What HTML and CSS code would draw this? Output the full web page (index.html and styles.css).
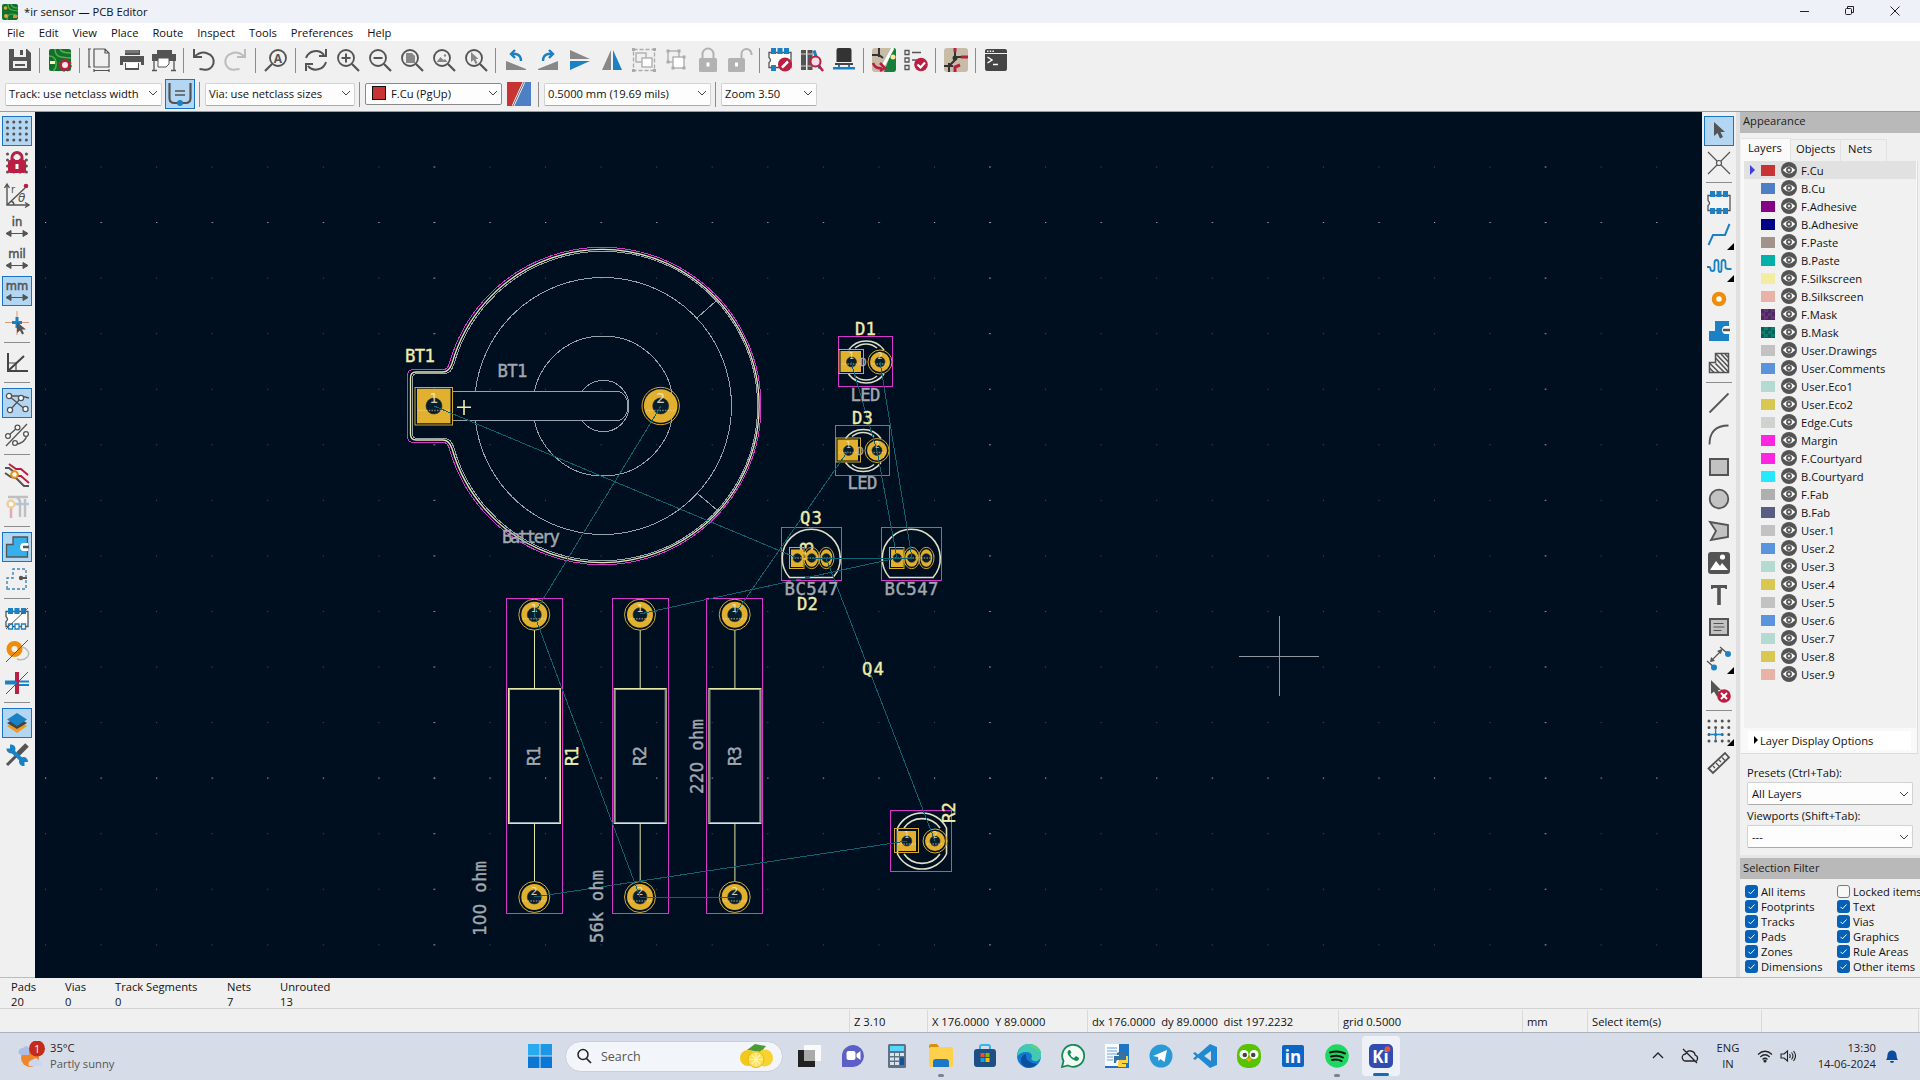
FILE: index.html
```html
<!DOCTYPE html>
<html lang="en">
<head>
<meta charset="utf-8">
<title>*ir sensor — PCB Editor</title>
<link rel="stylesheet" href="styles.css">
</head>
<body>
<svg class="defs" aria-hidden="true">
  <symbol id="eye" viewBox="0 0 16 16"><circle cx="8" cy="8" r="8" fill="#545454"/><path d="M1.8 8Q8 .8 14.200 8Q8 15.200 1.800 8Z" fill="#fff"/><circle cx="8" cy="8" r="2.900" fill="#545454"/><circle cx="8" cy="8" r="1.300" fill="#ddd"/></symbol>
  <symbol id="chev" viewBox="0 0 10 10"><path d="M1 3l4 4 4-4" fill="none" stroke="#444" stroke-width="1"/></symbol>
  <symbol id="mag" viewBox="0 0 24 24"><circle cx="10" cy="10" r="8" fill="none" stroke="#545454" stroke-width="1.800"/><path d="M16 16l7 7" stroke="#545454" stroke-width="2.200"/></symbol>
  <symbol id="tick" viewBox="0 0 13 13"><rect width="13" height="13" rx="3" fill="#0560b8"/><path d="M3.500 6.800l2 2 4-4.300" fill="none" stroke="#fff" stroke-width="1"/></symbol>
</svg>

<header class="titlebar">
  <svg class="appicon" viewBox="0 0 16 16"><rect width="16" height="16" rx="2" fill="#12702d"/><path d="M6 0q0 5 4 6t6 1M9 0q1 4 7 4M5 16q0-6 5-6t6 3" fill="none" stroke="#52b04c" stroke-width="1.200"/><circle cx="3.500" cy="4" r="1.800" fill="#e8a33a"/><circle cx="4" cy="12" r="2" fill="#e8a33a"/><rect x="11" y="11" width="4" height="3" fill="#e08c30"/></svg>
  <span class="title">*ir sensor — PCB Editor</span>
  <svg class="winbtns" viewBox="0 0 120 22" fill="none" stroke="#222"><path d="M9 10.500h9" /><rect x="54.500" y="7.500" width="6" height="6" rx="1"/><path d="M56.500 7V5.500h6v6H61M99.500 5.500l9 9m0-9l-9 9"/></svg>
</header>
<nav class="menubar"><span>File</span><span>Edit</span><span>View</span><span>Place</span><span>Route</span><span>Inspect</span><span>Tools</span><span>Preferences</span><span>Help</span></nav>

<div class="toolbar">
  <b><svg viewBox="0 0 24 24"><path d="M1 1h18l4 4v18H1z" fill="#545454"/><path d="M6 1h12v8H6zM5 13h14v7H5z" fill="#efefef"/><path d="M12 2h3v5h-3zM7 16h10v2H7z" fill="#545454"/></svg></b><hr>
  <b><svg viewBox="0 0 24 24"><rect x="1" y="1" width="22" height="22" rx="2" fill="#12702d"/><path d="M7 1q0 7 6 8t10 1M12 1q1 4 11 4M1 8q6 0 7 6t-3 9" fill="none" stroke="#52b04c" stroke-width="1.500"/><path d="M2 13h5v3H2z" fill="#fff3c0"/><circle cx="17" cy="17" r="4" fill="#f2e9e9" stroke="#ba1f43" stroke-width="2"/><circle cx="17" cy="17" r="5.800" fill="none" stroke="#ba1f43" stroke-width="2" stroke-dasharray="2.400 2.150"/></svg></b><hr>
  <b><svg viewBox="0 0 24 24" fill="none" stroke="#545454" stroke-width="1.200"><path d="M6 1h11l4 4v14H6zM17 1v4h4M1 1v18M0 1h3M0 19h3M6 22.500h15M6 21v3M21 21v3"/></svg></b>
  <b><svg viewBox="0 0 24 24"><path d="M5 2h15v5H5zM0 8h24v9h-3v-3H3v3H0zM5 15h14v7H5z" fill="#545454"/><path d="M6 15h12v5H6z" fill="#fff"/><path d="M5 2h14v3H5z" fill="#777"/></svg></b>
  <b><svg viewBox="0 0 24 24"><path d="M5 2h15v4H5zM0 6h24v7H0z" fill="#545454"/><path d="M6 10h11v6l-3 3H6z" fill="#fff" stroke="#545454"/><path d="M2 13v9M22 13v9M0 22.500h5M19 22.500h5" stroke="#545454" stroke-width="1.300"/></svg></b><hr>
  <b><svg viewBox="0 0 24 24" fill="none" stroke="#545454" stroke-width="2"><path d="M2 1v8h8M2.500 8.500q7-6 13-3a8 8 0 0 1-4 16l-4-.5"/></svg></b>
  <b><svg viewBox="0 0 24 24" fill="none" stroke="#bcbcbc" stroke-width="2"><path d="M21 1v8h-8M20.500 8.500q-7-6-13-3a8 8 0 0 0 4 16l4-.5"/></svg></b><hr>
  <b><svg viewBox="0 0 24 24"><g transform="matrix(-1 0 0 1 24 0)"><use href="#mag"/></g><text x="14" y="14.500" text-anchor="middle" class="iconA">A</text></svg></b><hr>
  <b><svg viewBox="0 0 24 24" fill="none" stroke="#545454" stroke-width="2"><path d="M2 10A10.500 10.500 0 0 1 20 7M22 1v7h-7M22 14A10.500 10.500 0 0 1 4 18M2 23v-7h7"/></svg></b>
  <b><svg viewBox="0 0 24 24"><use href="#mag"/><path d="M5.500 10h9M10 5.500v9" stroke="#545454" stroke-width="2"/></svg></b>
  <b><svg viewBox="0 0 24 24"><use href="#mag"/><path d="M5.500 10h9" stroke="#545454" stroke-width="2"/></svg></b>
  <b><svg viewBox="0 0 24 24"><use href="#mag"/><path d="M6 5h6l3 3v7H6z" fill="#888"/></svg></b>
  <b><svg viewBox="0 0 24 24"><use href="#mag"/><path d="M4.500 14l4-5 3 3 1.500-1 2.500 3z" fill="#888"/><circle cx="13" cy="7.500" r="1.200" fill="#888"/></svg></b>
  <b><svg viewBox="0 0 24 24"><use href="#mag"/><path d="M7 4v10l2.500-2 2 4 2-1-2-4h3z" fill="#888"/></svg></b><hr>
  <b><svg viewBox="0 0 24 24"><path d="M2 13l20 8v1H2z" fill="#888"/><path d="M8 6h4q5 1 5 7M11 2L7 6l4 4" fill="none" stroke="#1a81c4" stroke-width="2.400"/></svg></b>
  <b><svg viewBox="0 0 24 24"><path d="M22 13L2 21v1h20z" fill="#888"/><path d="M16 6h-4q-5 1-5 7M13 2l4 4-4 4" fill="none" stroke="#1a81c4" stroke-width="2.400"/></svg></b>
  <b><svg viewBox="0 0 24 24"><path d="M2 2l20 9H2z" fill="#888"/><path d="M2 13h20L2 22z" fill="#1a81c4"/></svg></b>
  <b><svg viewBox="0 0 24 24"><path d="M11 2v20H2z" fill="#888"/><path d="M13 2v20h9z" fill="#1a81c4"/></svg></b>
  <b><svg viewBox="0 0 24 24" fill="none" stroke="#aaa" stroke-width="1.300"><rect x="1.500" y="1.500" width="21" height="21" stroke-dasharray="4 2"/><rect x="4" y="5" width="10" height="9"/><rect x="10" y="10" width="10" height="9" fill="#fff"/><path d="M0 1.500h3M21 1.500h3M0 22.500h3M21 22.500h3" stroke-width="3"/></svg></b>
  <b><svg viewBox="0 0 24 24" fill="none" stroke="#aaa" stroke-width="1.300"><rect x="4" y="3" width="11" height="11"/><rect x="9" y="9" width="11" height="11" fill="#fff"/><path d="M2.500 3h3M13.500 3h3M2.500 14h3M18.500 9h3M7.500 20h3M18.500 20h3" stroke-width="3"/></svg></b>
  <b><svg viewBox="0 0 24 24"><path d="M6.500 12V6a5.500 5.500 0 0 1 11 0v6" fill="none" stroke="#b2b2b2" stroke-width="2"/><rect x="3" y="10" width="18" height="14" rx="1.500" fill="#b2b2b2"/><path d="M12 14.500v4" stroke="#fff" stroke-width="3"/></svg></b>
  <b><svg viewBox="0 0 24 24"><path d="M13.500 12V6a5 5 0 0 1 10 0v1" fill="none" stroke="#b2b2b2" stroke-width="2"/><rect x="0" y="10" width="17" height="14" rx="1.500" fill="#b2b2b2"/><path d="M8.500 14.500v4" stroke="#fff" stroke-width="3"/></svg></b><hr>
  <b><svg viewBox="0 0 24 24"><path d="M1 4.500h22v15H1v-5q3-2 0-5z" fill="#fff" stroke="#545454" stroke-width="1.300"/><path d="M3 0h5v6H3zM9.500 0h5v6h-5zM16 0h5v6h-5zM3 17h5v6H3z" fill="#1a81c4"/><circle cx="17" cy="16.500" r="7" fill="#ba1f43"/><path d="M14 19.500l6-6" stroke="#fff" stroke-width="2.500"/></svg></b>
  <b><svg viewBox="0 0 24 24"><path d="M1 2h5v20H1zM7.500 2h5v20h-5z" fill="#545454"/><path d="M1 6h5M7.500 6h5M1 18h5M7.500 18h4" stroke="#ccc"/><path d="M12.500 3l3-1 6 18-3 1z" fill="#1a81c4"/><circle cx="15.500" cy="13.500" r="5" fill="#f3dfe4" stroke="#ba1f43" stroke-width="2"/><path d="M19 18l4 5" stroke="#ba1f43" stroke-width="2.500"/></svg></b>
  <b><svg viewBox="0 0 24 24"><path d="M4.500 2Q4.500 0 6.500 0h11q2 0 2 2v12h-15z" fill="#333"/><path d="M3 15h18v2H3z" fill="#444"/><path d="M1 19h22v2.500H1zM6 17h2v2H6zM16 17h2v2h-2z" fill="#1a81c4"/></svg></b><hr>
  <b><svg viewBox="0 0 24 24"><rect width="24" height="24" rx="3" fill="#c7bca6"/><path d="M21 0h1q2 0 2 3v18q0 3-3 3h-9z" fill="#16803a"/><path d="M7 0v9M0 7h7l4 3" stroke="#333" stroke-width="2" fill="none"/><path d="M21 0L11 18" stroke="#fff" stroke-width="3"/><circle cx="21" cy="9" r="2.500" fill="#ffe7a0"/><path d="M1 15q2 6 9 5M8 15l5 5-5 3" fill="none" stroke="#ba1f43" stroke-width="2.500"/></svg></b>
  <b><svg viewBox="0 0 24 24"><path d="M1 2.500h4v4H1zM1 10h4v4H1zM1 17.500h4v4H1z" fill="none" stroke="#545454" stroke-width="1.300"/><path d="M8 4.500h9M8 12h5" stroke="#545454" stroke-width="1.400"/><circle cx="17" cy="16.500" r="6.800" fill="#ba1f43"/><path d="M13.500 16.500l3 3 4.500-5" fill="none" stroke="#fff" stroke-width="2.200"/></svg></b><hr>
  <b><svg viewBox="0 0 24 24"><rect width="24" height="24" rx="3" fill="#c7bca6"/><path d="M11 3v9l-6 6M11 9h10M5 15v9M0 18h9" stroke="#333" stroke-width="2" fill="none"/><circle cx="11" cy="10" r="2.500" fill="#333"/><path d="M11 0v4M17 9h7M11 24v-5l5-2" stroke="#ba1f43" stroke-width="3" fill="none"/></svg></b><hr>
  <b><svg viewBox="0 0 24 24"><rect x="1" y="1" width="22" height="22" rx="2" fill="#454545"/><path d="M1 5.500h22" stroke="#efefef"/><path d="M3 3.200h7" stroke="#efefef" stroke-width="1.500" stroke-dasharray="1.500 1.200"/><path d="M3.500 9l4.500 3-4.500 3M9 16.500h5" fill="none" stroke="#fff" stroke-width="1.500"/></svg></b>
</div>

<div class="toolbar2">
  <div class="combo w157">Track: use netclass width<svg><use href="#chev"/></svg></div>
  <div class="toggle"><svg viewBox="0 0 24 24"><path d="M1.500 1v15q0 5 5 5h11q5 0 5-5V1" fill="none" stroke="#545454" stroke-width="2.200"/><path d="M7 9h10M7 13h10" stroke="#545454" stroke-width="1.300"/><circle cx="12" cy="21" r="3" fill="#1a81c4"/></svg></div>
  <hr>
  <div class="combo w150">Via: use netclass sizes<svg><use href="#chev"/></svg></div>
  <hr>
  <div class="combo layer w137"><i></i>F.Cu (PgUp)<svg><use href="#chev"/></svg></div>
  <svg class="pair" viewBox="0 0 24 24"><path d="M0 0h24v24H0z" fill="#4d7fc4"/><path d="M0 0h17L7 24H0z" fill="#c83434"/><path d="M17 0L6 24" stroke="#fff" stroke-width="2.500"/><path d="M17 0L6 24" stroke="#444" stroke-width=".8"/></svg>
  <hr>
  <div class="combo w167">0.5000 mm (19.69 mils)<svg><use href="#chev"/></svg></div>
  <hr>
  <div class="combo w96">Zoom 3.50<svg><use href="#chev"/></svg></div>
</div>

<main class="work">
  <div class="vbar left">
    <b class="on"><svg viewBox="0 0 24 24"><path d="M2.500 3h24M2.500 9h24M2.500 15h24M2.500 21h24" stroke="#545454" stroke-width="3" stroke-linecap="round" stroke-dasharray="0 6.300"/></svg></b>
    <b><svg viewBox="0 0 24 24"><path d="M2.500 3h24M2.500 9h24M2.500 15h24M2.500 21h24" stroke="#545454" stroke-width="3" stroke-linecap="round" stroke-dasharray="0 6.300"/><path d="M7 11V6.500a5 5 0 0 1 10 0V11" fill="none" stroke="#ba1f43" stroke-width="3"/><rect x="3" y="9" width="18" height="13" rx="2" fill="#ba1f43"/><path d="M12 13v5" stroke="#fff" stroke-width="3"/></svg></b>
    <b><svg viewBox="0 0 24 24"><path d="M2 2v20h21M2 22L20 5M-.5 5L2 1l2.500 4M20 19.500l4 2.500-4 2.500M6 18q3 1 3 4" fill="none" stroke="#545454" stroke-width="1.400"/><circle cx="21" cy="3" r="2.300" fill="#ba1f43"/><text x="6" y="10" class="ir">r</text><text x="13" y="19" class="ir it">θ</text></svg></b>
    <b><svg viewBox="0 0 24 24"><text x="12" y="11" class="unit">in</text><path d="M4 18.500h16M6 15.500l-5 3 5 3zM18 15.500l5 3-5 3z" fill="#545454" stroke="#545454"/></svg></b>
    <b><svg viewBox="0 0 24 24"><text x="12" y="11" class="unit">mil</text><path d="M4 18.500h16M6 15.500l-5 3 5 3zM18 15.500l5 3-5 3z" fill="#545454" stroke="#545454"/></svg></b>
    <b class="on"><svg viewBox="0 0 24 24"><text x="12" y="11" class="unit">mm</text><path d="M4 18.500h16M6 15.500l-5 3 5 3zM18 15.500l5 3-5 3z" fill="#545454" stroke="#545454"/></svg></b>
    <b><svg viewBox="0 0 24 24"><path d="M0 11.500h24M12 0v24" stroke="#d99a7a" /><path d="M7 11.500h10M12 6v11" stroke="#1a81c4" stroke-width="3"/><path d="M12 11v11l3-2.500 2 4 2-1-2-4h4z" fill="#545454"/></svg></b><hr>
    <b><svg viewBox="0 0 24 24" fill="none" stroke="#444" stroke-width="2"><path d="M3 2v18h20M3 20L19 5"/><path d="M3 12h8v8" stroke-width="1.200"/></svg></b><hr>
    <b class="on"><svg viewBox="0 0 24 24" stroke="#545454" stroke-width="1.300"><path d="M4 5l17 14M16 7L5 19M4 5h12l8 2" fill="none"/><g fill="#fff"><circle cx="4" cy="5" r="2.600"/><circle cx="16" cy="7" r="2.600"/><circle cx="5" cy="19" r="2.600"/><circle cx="20.500" cy="18" r="2.600"/></g></svg></b>
    <b><svg viewBox="0 0 24 24" stroke="#545454" stroke-width="1.300" fill="none"><path d="M1 23L22 1M3 13l10-9M10 21q10 0 12-9"/><g fill="#fff"><circle cx="3" cy="13" r="2.400"/><circle cx="12.500" cy="4.500" r="2.400"/><circle cx="10" cy="20" r="2.400"/><circle cx="21" cy="11" r="2.400"/></g></svg></b><hr>
    <b><svg viewBox="0 0 24 24" fill="none" stroke-width="2"><path d="M0 5h4l5 4M0 10l6 4 5 1 8 8h5" stroke="#545454"/><path d="M4 1l7 5h5l7 6M11 13h5l8 7" stroke="#ba1f43"/><circle cx="9.500" cy="11.500" r="3.300" stroke="#ee8d0a" fill="#fff"/></svg></b>
    <b><svg viewBox="0 0 24 24" fill="none" stroke-width="2.500"><path d="M6 11v12" stroke="#e2aab3"/><path d="M8 9h16" stroke="#a9c9ea"/><path d="M3 2h9l3 4v16M13 2h10M20 4v18" stroke="#bfbfbf"/><circle cx="6" cy="9" r="3.500" stroke="#f0cf9c" fill="#fff"/></svg></b><hr>
    <b class="on"><svg viewBox="0 0 24 24"><path d="M1.500 22V9.500H8V2h14.500v20z" fill="#35b0ea" stroke="#545454" stroke-width="1.300"/><path d="M23 8h-5a4.200 4.200 0 0 0 0 8h5z" fill="#fff"/><path d="M18 12h6" stroke="#545454" stroke-width="2.500"/></svg></b>
    <b><svg viewBox="0 0 24 24"><path d="M2 22V11h6V2h13v20z" fill="none" stroke="#3e86b3" stroke-width="1.400" stroke-dasharray="3 2"/><circle cx="16" cy="11" r="2.200" fill="#545454"/><path d="M16 11h6" stroke="#545454" stroke-width="2"/></svg></b><hr>
    <b><svg viewBox="0 0 24 24"><path d="M1 4.500h22v15H1v-5q3-2 0-5z" fill="#fff" stroke="#545454" stroke-width="1.300"/><path d="M3 1h5v6H3zM9.500 1h5v6h-5zM16 1h5v6h-5z" fill="#1a81c4"/><path d="M3.500 17h4v5h-4zM10 17h4v5h-4zM16.500 17h4v5h-4z" fill="#fff" stroke="#1a81c4" stroke-width="1.300"/><path d="M1 22L23 1" stroke="#545454"/></svg></b>
    <b><svg viewBox="0 0 24 24" fill="none"><circle cx="9.500" cy="10" r="5.500" stroke="#ee8d0a" stroke-width="5"/><path d="M12 20a8 6 0 0 0 10-9 8 5 0 0 0-5-3" stroke="#bbb" stroke-width="1.500"/><path d="M1 23L23 1" stroke="#545454"/></svg></b>
    <b><svg viewBox="0 0 24 24" fill="none"><path d="M0 10.500h24M13 14h11" stroke="#1a81c4" stroke-width="2"/><path d="M12 1v22" stroke="#ba1f43" stroke-width="4"/><path d="M0 12h12" stroke="#1a81c4" stroke-width="3"/><path d="M1 23L23 1" stroke="#545454"/></svg></b><hr>
    <b class="on"><svg viewBox="0 0 24 24"><path d="M12 8l10 7-10 7-10-7z" fill="#ee9c1d"/><path d="M12 6l10 6-10 6-10-6z" fill="#444"/><path d="M12 2l10 6.500L12 15 2 8.500z" fill="#1a81c4"/></svg></b>
    <b><svg viewBox="0 0 24 24"><path d="M2 22L21 3" stroke="#545454" stroke-width="3"/><path d="M13 11l9-9" stroke="#545454" stroke-width="5"/><path d="M5 6l14 13" stroke="#1a81c4" stroke-width="4"/><path d="M5 1.500v4H1.500A4.500 4.500 0 1 0 5 1.500zM19.500 23v-4H23A4.500 4.500 0 1 0 19.500 23z" fill="#1a81c4"/></svg></b>
  </div>

  <svg class="canvas" viewBox="35 112 1667 866">
    <defs>
      <pattern id="dots" patternUnits="userSpaceOnUse" x="45" y="166.500" width="55.560" height="55.560"><path d="M0 .5h1" stroke="#46535f"/></pattern>
      <pattern id="rowdots" patternUnits="userSpaceOnUse" x="45" y="222" width="55.560" height="555.600"><path d="M0 .5h1.200" stroke="#98a3ab"/></pattern>
      <pattern id="coldots" patternUnits="userSpaceOnUse" x="433.500" y="166.500" width="555.600" height="55.560"><path d="M0 .5h1.500" stroke="#98a3ab"/></pattern>
      <g id="led">
        <rect class="mg" x="838.500" y="336.500" width="54" height="50"/>
        <path class="slk2" d="M848.500 350A22 22 0 0 1 884 350M848.500 374A22 22 0 0 0 884 374M855 348A17 17 0 0 1 877 348M855 376A17 17 0 0 0 877 376"/>
        <rect x="840.500" y="351" width="20.500" height="21" class="pad"/><rect x="839" y="349.500" width="24.500" height="24" class="padl"/>
        <circle cx="880" cy="362" r="10" class="pad"/><circle cx="880" cy="362" r="12" class="padl"/>
        <text class="fab s" x="860" y="366">D</text>
        <circle class="hole" cx="851.500" cy="362" r="5"/><circle class="hole" cx="880" cy="362" r="5"/>
        <text class="pn s" x="851.500" y="359">1</text><text class="pn s" x="880" y="359">2</text>
        <path class="tiny" d="M842 364h19M871 364h18"/>
      </g>
      <g id="bjt">
        <rect class="mg" x="781.500" y="527.500" width="60" height="53"/>
        <path class="slk2" d="M789.500 577.500A29 29 0 1 1 833 577.500Z"/>
        <rect class="pad" x="791" y="549.500" width="12.500" height="17.500"/><rect class="padl" x="789.500" y="547.500" width="14.500" height="21"/>
        <ellipse class="pad" cx="811.700" cy="558" rx="6.500" ry="8.700"/><ellipse class="padl" cx="811.700" cy="558" rx="8" ry="10.700"/>
        <ellipse class="pad" cx="826.300" cy="558" rx="6" ry="8.700"/><ellipse class="padl" cx="826.300" cy="558" rx="7.700" ry="10.700"/>
        <circle class="hole" cx="797.300" cy="558" r="4.300"/><circle class="hole" cx="811.700" cy="558" r="4.300"/><circle class="hole" cx="826.300" cy="558" r="4.300"/>
        <path class="tiny" d="M792 558h10M807 558h10M821 558h10"/>
      </g>
      <g id="rpad"><circle r="13" class="pad"/><circle r="15.500" class="padl"/><circle r="7" class="hole"/><path class="tiny" d="M-12 4H11"/></g>
      <g id="res">
        <rect class="mg" x="506.500" y="598.500" width="56" height="315"/>
        <path class="slk" d="M534.500 630v58M534.500 824v57"/><rect class="slk" x="508.500" y="688.500" width="52" height="135"/><rect class="fabl" x="509.500" y="689.500" width="50" height="133"/>
        <use href="#rpad" x="534.300" y="614.700"/><use href="#rpad" x="534.300" y="897"/>
        <text class="pn m" x="534.300" y="612">1</text><text class="pn m" x="534.300" y="895">2</text>
      </g>
    </defs>
    <rect class="bg" x="35" y="112" width="1667" height="866"/>
    <rect x="35" y="112" width="1667" height="866" fill="url(#dots)"/>
    <rect x="35" y="112" width="1667" height="866" fill="url(#rowdots)"/>
    <rect x="35" y="112" width="1667" height="866" fill="url(#coldots)"/>

    <g class="crisp">
      <circle class="fabl" cx="603" cy="406" r="128.500"/><circle class="fabl" cx="603" cy="406" r="70"/>
      <path class="bg" d="M452 391.500H617V420.500H452z"/>
      <path class="fabl" d="M452 391.500H617A11 14.500 0 0 1 617 420.500H452M582 391.500A25.700 25.700 0 1 1 582 420.500M697.500 317.500L716 301M697.500 493.500L717 510"/>
      <path class="fabl" d="M454 364A154.700 154.700 0 1 1 454 448Q451 438.500 445 438.500H417Q412.500 438.500 412.500 433V379Q412.500 373.500 417 373.500H445Q451 373.500 454 364Z"/>
    </g>
    <path class="outline" d="M452 363.500A156.500 156.500 0 1 1 452 448.500Q449 440 443 440H416Q410.500 440 410.500 434V378Q410.500 372 416 372H443Q449 372 452 363.500Z"/>
    <path class="mg" d="M449.500 363A158.700 158.700 0 1 1 449.500 449Q448 442.500 443 442.500H414Q407.500 442.500 407.500 436V376Q407.500 369.500 414 369.500H443Q448 369.500 449.500 363Z"/>
    <rect class="pad" x="417" y="388.700" width="33.500" height="34.600"/><rect class="padl" x="415" y="387.500" width="37.500" height="37.500"/><circle class="hole" cx="434" cy="406" r="8"/>
    <circle class="pad" cx="660.700" cy="406" r="16.800"/><circle class="padl" cx="660.700" cy="406" r="18.700"/><circle class="hole" cx="660.700" cy="406" r="8"/>
    <path class="tiny" d="M418 410.500h32M646 410.500h30"/>
    <text class="pn" x="434" y="403">1</text><text class="pn" x="660.700" y="403">2</text>
    <path class="plus" d="M457 407.300h14M464 400v15"/>

    <use href="#led"/><use href="#led" x="-3" y="88.500"/>
    <text class="silk" transform="translate(812.500 561) rotate(-90)" textLength="20">R3</text>
    <use href="#bjt"/><use href="#bjt" x="100"/>
    <use href="#res"/><use href="#res" x="105.700"/><use href="#res" x="200.400"/>
    <g>
      <rect class="mg" x="890.500" y="810.500" width="61" height="61"/>
      <path class="slk2" d="M897.500 828A27.500 27.500 0 0 1 946.500 828M897.500 854A27.500 27.500 0 0 0 946.500 854M904 828A22 22 0 0 1 940 828M904 854A22 22 0 0 0 940 854M897.500 828v26M946.500 828v26"/>
      <rect class="pad" x="897" y="831" width="19" height="20"/><rect class="padl" x="894.500" y="828.500" width="24" height="24"/><circle class="pad" cx="935" cy="841" r="10"/><circle class="padl" cx="935" cy="841" r="12"/>
      <circle class="hole" cx="906.800" cy="841" r="5"/><circle class="hole" cx="935" cy="841" r="5"/>
      <text class="pn s" x="906.800" y="838">1</text><text class="pn s" x="935" y="838">2</text><path class="tiny" d="M898 844h18M927 844h17"/>
    </g>
    <path class="rats" d="M434 406L797 558M661 406L534 614L640 897L735 897M534 897L907 841M640 614L897 558M735 614L848 451M812 558H912M826 558L935 841M851 362L877 451L897 558M880 362L912 558"/>

    <g class="silk">
      <text x="405" y="361.700" textLength="30">BT1</text>
      <text x="855" y="335" textLength="21">D1</text><text x="852" y="423.500" textLength="21">D3</text>
      <text x="800" y="524" textLength="22">Q3</text><text x="797" y="610" textLength="21">D2</text><text x="862" y="675" textLength="22">Q4</text>
      <text transform="translate(577.500 766) rotate(-90)" textLength="20">R1</text>
      <text transform="translate(954.500 823) rotate(-90)" textLength="21">R2</text>
    </g>
    <g class="fab">
      <text x="497.500" y="377" textLength="30">BT1</text><text x="502" y="543" textLength="58">Battery</text>
      <text x="850.500" y="401" textLength="30">LED</text><text x="847.500" y="489" textLength="30">LED</text>
      <text x="784.500" y="594.500" textLength="54">BC547</text><text x="884.500" y="594.500" textLength="54">BC547</text>
      <text transform="translate(540 766) rotate(-90)" textLength="20">R1</text>
      <text transform="translate(646 766) rotate(-90)" textLength="20">R2</text>
      <text transform="translate(741 766) rotate(-90)" textLength="20">R3</text>
      <text transform="translate(702.800 794) rotate(-90)" textLength="75">22<tspan class="z">0</tspan> ohm</text>
      <text transform="translate(486 936) rotate(-90)" textLength="75">1<tspan class="z">00</tspan> ohm</text>
      <text transform="translate(602.800 943) rotate(-90)" textLength="73">56k ohm</text>
    </g>
    <path d="M1239 656.500h80M1279.500 616v80" stroke="#8f989f"/>
  </svg>

  <div class="vbar right">
    <b class="on"><svg viewBox="0 0 24 24"><path d="M7 3v14l3.500-3 2.500 5.500 3-1.500-2.500-5h4.500z" fill="#545454"/></svg></b>
    <b><svg viewBox="0 0 24 24" fill="none" stroke="#545454" stroke-width="1.200"><path d="M1 1l9 9M23 1l-9 9M1 23l9-9M23 23l-9-9"/><circle cx="12" cy="12" r="2.500"/></svg></b><hr>
    <b><svg viewBox="0 0 24 24"><path d="M1 4.500h22v15H1v-5q3-2 0-5z" fill="#f4f4f4" stroke="#545454" stroke-width="1.300"/><path d="M3 0h5v6H3zM9.500 0h5v6h-5zM16 0h5v6h-5zM3 17h5v6H3zM9.500 17h5v6h-5zM16 17h5v6h-5z" fill="#1a81c4"/></svg></b>
    <b class="more"><svg viewBox="0 0 24 24"><path d="M1.500 22L6 12h12l4.500-11" fill="none" stroke="#1a81c4" stroke-width="2"/></svg></b>
    <b class="more"><svg viewBox="0 0 24 24"><path d="M0 12h2q1.500 0 1.500 2t2 2 2-2V8q0-3 2-3t2 3v6q0 3 1.500 3t1.500-3V8q0-3 2-3t2 3v4q0 2 3 2h3" fill="none" stroke="#1a81c4" stroke-width="1.800"/></svg></b>
    <b><svg viewBox="0 0 24 24"><circle cx="12" cy="12" r="5" fill="#fff" stroke="#ee8d0a" stroke-width="4.500"/></svg></b>
    <b><svg viewBox="0 0 24 24"><path d="M2 22V12h6V2h14v20z" fill="#1a81c4"/><path d="M23 7h-5a4.200 4.200 0 0 0 0 8h5z" fill="#fff"/><path d="M16 11h7" stroke="#545454" stroke-width="2.500"/></svg></b>
    <b><svg viewBox="0 0 24 24" fill="none" stroke="#545454"><path d="M2.500 21.500v-10h6v-9h13v19z" stroke-width="1.500"/><path d="M2.500 17l4.500 4.500M2.500 12L12 21.500M8.500 12.500l9 9M8.500 7l13 14M9 3l12.500 13M14 3l7.500 8M18 3l3.500 3.500" stroke-width="1.600"/></svg></b><hr>
    <b><svg viewBox="0 0 24 24"><path d="M2.500 21.500l19-19" stroke="#545454" stroke-width="1.800"/></svg></b>
    <b><svg viewBox="0 0 24 24"><path d="M2.500 21.500q0-19 19-19" fill="none" stroke="#545454" stroke-width="1.800"/></svg></b>
    <b><svg viewBox="0 0 24 24"><path d="M3 4h18v16H3z" fill="#c2c2c2" stroke="#545454" stroke-width="2"/></svg></b>
    <b><svg viewBox="0 0 24 24"><circle cx="12" cy="12" r="9.300" fill="#c2c2c2" stroke="#545454" stroke-width="1.800"/></svg></b>
    <b><svg viewBox="0 0 24 24"><path d="M3 3l18 3v12L4 21l5-9z" fill="#c2c2c2" stroke="#545454" stroke-width="1.800"/></svg></b>
    <b><svg viewBox="0 0 24 24"><rect x="1" y="1" width="22" height="22" rx="3" fill="#545454"/><path d="M3 19l6-9 4 5 2-3 6 7z" fill="#fff"/><circle cx="15.500" cy="6" r="2.600" fill="#fff"/></svg></b>
    <b><svg viewBox="0 0 24 24"><path d="M4 2h16v4h-1.500L17.500 5h-3.700v17h-3.600V5H6.500L5.500 6H4z" fill="#545454"/></svg></b>
    <b><svg viewBox="0 0 24 24"><path d="M3 4h18v16H3z" fill="#c2c2c2" stroke="#545454" stroke-width="2"/><path d="M6.500 8.500h10M6.500 12h11M6.500 15.500h8" stroke="#545454" stroke-width="1.200"/></svg></b>
    <b class="more"><svg viewBox="0 0 24 24"><path d="M0 14l8 7M13 0l8 7M4 14L15 3" stroke="#545454" stroke-width="1.200"/><path d="M3 15l1-5 4 4zM15 2l-5 2 4 3z" fill="#545454"/><circle cx="7" cy="20.500" r="3" fill="#1a81c4"/><circle cx="21" cy="7" r="3" fill="#1a81c4"/></svg></b>
    <b><svg viewBox="0 0 24 24"><path d="M4 1v14l3-2.500 3 5 3-1.500-2-5h3z" fill="#545454"/><circle cx="17" cy="17" r="6.800" fill="#ba1f43"/><path d="M14 14l6 6m0-6l-6 6" stroke="#fff" stroke-width="2"/></svg></b><hr>
    <b class="more"><svg viewBox="0 0 24 24"><path d="M2 2h24M2 8.500h24M2 15.500h24M2 22h24" stroke="#545454" stroke-width="3" stroke-linecap="round" stroke-dasharray="0 6.600"/><path d="M2 15.500h14M8.600 9v13" stroke="#1a81c4" stroke-width="1.300"/></svg></b>
    <b><svg viewBox="0 0 24 24"><path d="M1.500 17.500L18 2l4 4.500L6 22z" fill="none" stroke="#545454" stroke-width="1.800"/><path d="M6 15l2 2M9 12l3 3M12 9l2 2M15 6.500l3 3" stroke="#545454" stroke-width="1.300"/></svg></b>
  </div>

  <aside class="panel">
    <h2>Appearance</h2>
    <div class="tabs"><span class="cur">Layers</span><span>Objects</span><span>Nets</span></div>
    <div class="book">
      <ul>
        <li class="sel"><i class="c-fcu"></i><svg><use href="#eye"/></svg>F.Cu</li>
        <li><i class="c-bcu"></i><svg><use href="#eye"/></svg>B.Cu</li>
        <li><i class="c-fadh"></i><svg><use href="#eye"/></svg>F.Adhesive</li>
        <li><i class="c-badh"></i><svg><use href="#eye"/></svg>B.Adhesive</li>
        <li><i class="c-fpaste"></i><svg><use href="#eye"/></svg>F.Paste</li>
        <li><i class="c-bpaste"></i><svg><use href="#eye"/></svg>B.Paste</li>
        <li><i class="c-fsilk"></i><svg><use href="#eye"/></svg>F.Silkscreen</li>
        <li><i class="c-bsilk"></i><svg><use href="#eye"/></svg>B.Silkscreen</li>
        <li><i class="c-fmask"></i><svg><use href="#eye"/></svg>F.Mask</li>
        <li><i class="c-bmask"></i><svg><use href="#eye"/></svg>B.Mask</li>
        <li><i class="c-grey"></i><svg><use href="#eye"/></svg>User.Drawings</li>
        <li><i class="c-blue"></i><svg><use href="#eye"/></svg>User.Comments</li>
        <li><i class="c-mint"></i><svg><use href="#eye"/></svg>User.Eco1</li>
        <li><i class="c-gold"></i><svg><use href="#eye"/></svg>User.Eco2</li>
        <li><i class="c-edge"></i><svg><use href="#eye"/></svg>Edge.Cuts</li>
        <li><i class="c-pink"></i><svg><use href="#eye"/></svg>Margin</li>
        <li><i class="c-pink"></i><svg><use href="#eye"/></svg>F.Courtyard</li>
        <li><i class="c-cyan"></i><svg><use href="#eye"/></svg>B.Courtyard</li>
        <li><i class="c-ffab"></i><svg><use href="#eye"/></svg>F.Fab</li>
        <li><i class="c-bfab"></i><svg><use href="#eye"/></svg>B.Fab</li>
        <li><i class="c-grey"></i><svg><use href="#eye"/></svg>User.1</li>
        <li><i class="c-blue"></i><svg><use href="#eye"/></svg>User.2</li>
        <li><i class="c-mint"></i><svg><use href="#eye"/></svg>User.3</li>
        <li><i class="c-gold"></i><svg><use href="#eye"/></svg>User.4</li>
        <li><i class="c-grey"></i><svg><use href="#eye"/></svg>User.5</li>
        <li><i class="c-blue"></i><svg><use href="#eye"/></svg>User.6</li>
        <li><i class="c-mint"></i><svg><use href="#eye"/></svg>User.7</li>
        <li><i class="c-gold"></i><svg><use href="#eye"/></svg>User.8</li>
        <li><i class="c-bsilk"></i><svg><use href="#eye"/></svg>User.9</li>
      </ul>
      <div class="ldo"><i></i>Layer Display Options</div>
    </div>
    <div class="presets">
      <label>Presets (Ctrl+Tab):</label><div class="combo">All Layers<svg><use href="#chev"/></svg></div>
      <label>Viewports (Shift+Tab):</label><div class="combo">---<svg><use href="#chev"/></svg></div>
    </div>
    <h2 class="sf">Selection Filter</h2>
    <div class="filter">
      <span><svg><use href="#tick"/></svg>All items</span><span><i></i>Locked items</span>
      <span><svg><use href="#tick"/></svg>Footprints</span><span><svg><use href="#tick"/></svg>Text</span>
      <span><svg><use href="#tick"/></svg>Tracks</span><span><svg><use href="#tick"/></svg>Vias</span>
      <span><svg><use href="#tick"/></svg>Pads</span><span><svg><use href="#tick"/></svg>Graphics</span>
      <span><svg><use href="#tick"/></svg>Zones</span><span><svg><use href="#tick"/></svg>Rule Areas</span>
      <span><svg><use href="#tick"/></svg>Dimensions</span><span><svg><use href="#tick"/></svg>Other items</span>
    </div>
  </aside>
</main>

<section class="msg"><div>Pads<br>20</div><div>Vias<br>0</div><div>Track Segments<br>0</div><div>Nets<br>7</div><div>Unrouted<br>13</div></section>
<section class="status"><span></span><span>Z 3.10</span><span>X 176.0000&nbsp; Y 89.0000</span><span>dx 176.0000&nbsp; dy 89.0000&nbsp; dist 197.2232</span><span>grid 0.5000</span><span>mm</span><span>Select item(s)</span><span></span></section>

<footer class="taskbar">
  <div class="weather">
    <svg viewBox="0 0 30 30"><circle cx="13" cy="17" r="9" fill="#f0862a"/><path d="M2 13a4 4 0 0 1 4-6q3-4 6 0v7H4z" fill="#aebfe6"/><path d="M12 25a4 4 0 0 1 3-6q5-4 7 1 4 2 2 5z" fill="#c8d6f4"/><circle cx="20" cy="7.500" r="8" fill="#c42b1c"/><text x="20" y="11.500" class="badge">1</text></svg>
    <div>35°C<br><span>Partly sunny</span></div>
  </div>
  <div class="apps">
    <div><svg viewBox="0 0 24 24"><path d="M0 0h11.500v11.500H0z" fill="#29a9ee"/><path d="M12.500 0H24v11.500H12.500z" fill="#1c97e6"/><path d="M0 12.500h11.500V24H0zM12.500 12.500H24V24H12.500z" fill="#0878d4"/></svg></div>
    <div class="search"><svg class="sm" viewBox="0 0 16 16"><circle cx="7" cy="6.500" r="5" fill="none" stroke="#222" stroke-width="1.500"/><path d="M10.500 10.500L15 15" stroke="#222" stroke-width="1.700"/></svg>Search
      <svg class="lemon" viewBox="0 0 34 24"><path d="M8 6l8-6 5 1 6 1-5 6z" fill="#4d9a36"/><circle cx="9" cy="14" r="8" fill="#f3c81c"/><ellipse cx="26" cy="14" rx="8" ry="8.500" fill="#f7d32f"/><circle cx="17" cy="15.500" r="8" fill="#fbe15a" stroke="#e8b916"/><path d="M17 9v13M11 15.500h12M13 11l8 9M21 11l-8 9" stroke="#fff3b0" stroke-width="1.200"/></svg></div>
    <div><svg viewBox="0 0 24 24"><rect x="7" y="1" width="17" height="16" fill="#fafafa"/><rect x="1" y="6" width="17" height="17" fill="#222"/><rect x="7" y="6" width="11" height="11" fill="#aaa"/></svg></div>
    <div><svg viewBox="0 0 24 24"><path d="M1 23V11A11 11 0 1 1 12 23z" fill="#5b5fc7"/><rect x="5.500" y="7" width="9" height="9" rx="2" fill="#fff"/><path d="M15.500 10l4-3v9l-4-3z" fill="#fff"/></svg></div>
    <div><svg viewBox="0 0 24 24"><rect x="3" y="0" width="18" height="24" rx="1.500" fill="#5f7184"/><rect x="5" y="2" width="14" height="5" fill="#55d8f7"/><path d="M5 9h4v3H5zM10 9h4v3h-4zM15 9h4v3h-4zM5 13.500h4v3H5zM10 13.500h4v3h-4zM5 18h4v3H5zM10 18h4v3h-4z" fill="#dbe3ea"/><path d="M15 13.500h4V21h-4z" fill="#12519c"/></svg></div>
    <div class="run"><svg viewBox="0 0 24 24"><path d="M0 2q0-2 2-2h6l3 4H0z" fill="#d9920e"/><rect y="3" width="24" height="20" rx="2" fill="#ffd04c"/><path d="M4 23v-5q0-3 3-3h10q3 0 3 3v5z" fill="#1a78c8"/></svg></div>
    <div><svg viewBox="0 0 24 24"><path d="M7 6V3q0-2 2-2h6q2 0 2 2v3" fill="none" stroke="#38b3ec" stroke-width="2"/><rect x="1" y="5" width="22" height="18" rx="3" fill="#1d4f84"/><path d="M7.500 9h4v4h-4z" fill="#f25022"/><path d="M12.500 9h4v4h-4z" fill="#7fba00"/><path d="M7.500 14h4v4h-4z" fill="#00a4ef"/><path d="M12.500 14h4v4h-4z" fill="#ffb900"/></svg></div>
    <div><svg viewBox="0 0 24 24"><circle cx="12" cy="12" r="12" fill="#1679d0"/><path d="M2 6Q8-3 17 1t7 12q-2 5-7 4-4-1-2-4 0-5-6-5T0 13Q0 9 2 6z" fill="#41c9b4"/><path d="M9 10q-1 9 11 10-5 5-12 3-5-3-4-8 1-4 5-5z" fill="#0b4fa0"/><path d="M13 1q9 0 11 10-1-6-10-8z" fill="#6fd558"/></svg></div>
    <div><svg viewBox="0 0 24 24"><path d="M1 23l1.500-6A11 11 0 1 1 7 21.500z" fill="#f4fbf7" stroke="#158a55" stroke-width="1.800"/><path d="M8 6q-3 2 0 6t7 5q3 0 3-3l-3-2-2 2q-3-1-4-4l1.500-1.500L9 6z" fill="#158a55"/></svg></div>
    <div><svg viewBox="0 0 24 24"><path d="M0 0h24v24H0z" fill="#1b74c6"/><path d="M0 0h14v22H0z" fill="#f6fafe"/><path d="M2 4h10M2 7h10M2 10h10M2 13h6M2 16h6" stroke="#6ca5d8"/><path d="M14 8h6v8h-7q-2 0-2 3H9v-7h7v-1h-4V9z" fill="#3671a4"/><path d="M21 12h2v7h-6v1h4v3h-8v-5q0-2 2-2h6z" fill="#ffd340"/></svg></div>
    <div><svg viewBox="0 0 24 24"><circle cx="12" cy="12" r="11.500" fill="#2a9ad6"/><path d="M4 12l14-6-2.500 12-4-3-2 2-.5-4z" fill="#fff"/></svg></div>
    <div><svg viewBox="0 0 24 24"><path d="M17 0l7 3v18l-7 3L5 13.500 2 16l-2-1.500 3-2.500-3-2.500L2 8l3 2.500zm1 7l-7 5 7 5z" fill="#1f8ad2"/></svg></div>
    <div><svg viewBox="0 0 24 24"><rect y="0" width="24" height="24" rx="10" fill="#58c302"/><circle cx="7" cy="10.500" r="4.500" fill="#fff"/><circle cx="17" cy="10.500" r="4.500" fill="#fff"/><circle cx="7.800" cy="11" r="2.300" fill="#444"/><circle cx="16.200" cy="11" r="2.300" fill="#444"/><path d="M9 15q3-2 6 0l-3 3z" fill="#f5a50a"/></svg></div>
    <div><svg viewBox="0 0 24 24"><rect x="1" y="1" width="22" height="22" rx="2" fill="#0a66c2"/><text x="12" y="18.500" class="li">in</text></svg></div>
    <div class="run"><svg viewBox="0 0 24 24"><circle cx="12" cy="12" r="11.800" fill="#1ed760"/><path d="M5 8.500q8-2.500 15 1M6 12.500q7-2 12 1M7 16q5-1.500 9.500 1" fill="none" stroke="#111" stroke-width="2" stroke-linecap="round"/></svg></div>
    <div class="act"><svg viewBox="0 0 24 24"><rect width="24" height="24" rx="5" fill="#314cb0"/><text x="11.500" y="18.500" class="ki">Ki</text><circle cx="18.500" cy="5" r="2.800" fill="#f0503c"/></svg></div>
  </div>
  <div class="tray">
    <svg viewBox="0 0 16 16"><path d="M3 10l5-5 5 5" fill="none" stroke="#222" stroke-width="1.300"/></svg>
    <svg class="cl" viewBox="0 0 18 18" fill="none" stroke="#222" stroke-width="1.300"><path d="M5 14a3.500 3.500 0 0 1-.5-7Q6 3 10 4t4 4q3 1 2.500 4T13 14zM2 2l14 14"/></svg>
    <div class="lang">ENG<br>IN</div>
    <svg class="wf" viewBox="0 0 16 16" fill="none" stroke="#222" stroke-width="1.200"><path d="M1 6.500Q8 0 15 6.500M3.300 9Q8 4.500 12.700 9M5.500 11.500Q8 9 10.500 11.500"/><circle cx="8" cy="13" r="1" fill="#222"/></svg>
    <svg class="vol" viewBox="0 0 16 16" fill="none" stroke="#222" stroke-width="1.100"><path d="M1 6h3l3.500-3v10L4 10H1zM9.500 6q1.500 2 0 4M11.500 4.500q3 3.500 0 7M13.500 3q4 5 0 10"/></svg>
    <div class="clock">13:30<br>14-06-2024</div>
    <svg class="bell" viewBox="0 0 16 16"><path d="M2 12q1.500-2 1.500-5a4.500 4.500 0 0 1 9 0q0 3 1.500 5zM6 13h4q0 2-2 2t-2-2z" fill="#0b4a9c"/></svg>
  </div>
</footer>
</body>
</html>
```
FILE: styles.css
```css
* { box-sizing: border-box; }
body { margin: 0; width: 1920px; height: 1080px; overflow: hidden; display: flex; flex-direction: column; background: #f0f0f0; color: #111; font: 11.2px/15px "Open Sans", "Noto Sans", sans-serif; white-space: nowrap; }
svg { display: block; flex: none; }
.defs { display: none; }
hr { border: 0; margin: 0; flex: none; }

.titlebar { height: 23px; flex: none; background: #eef2f8; display: flex; align-items: center; padding-left: 2px; }
.appicon { width: 16px; height: 16px; margin-right: 6px; }
.title { flex: 1; }
.winbtns { width: 120px; height: 22px; margin-right: 9px; }
.menubar { height: 18px; flex: none; background: #fff; display: flex; gap: 14px; padding: 2px 0 0 7px; }

.toolbar { height: 38px; flex: none; display: flex; align-items: center; padding-left: 4px; }
.toolbar b { width: 32px; height: 32px; display: grid; place-items: center; flex: none; }
.toolbar b svg, .vbar b svg { width: 24px; height: 24px; overflow: visible; }
.toolbar hr { width: 8px; height: 25px; background: linear-gradient(#8c8c8c, #8c8c8c) 3px 0 / 1px 100% no-repeat; }
.iconA { font: bold 12px "Open Sans", sans-serif; fill: #545454; }

.toolbar2 { height: 32px; flex: none; display: flex; align-items: center; padding: 0 0 2px 5px; }
.toolbar2 hr { width: 1px; height: 25px; background: #8c8c8c; margin: 0 5px 0 4px; }
.combo { height: 23px; flex: none; background: #fdfdfd; border: 1px solid #d2d2d2; border-bottom-color: #aaa; border-radius: 2px; padding: 0 3px; display: flex; align-items: center; }
.toolbar2 .combo { padding-bottom: 2px; }
.combo svg { width: 10px; height: 10px; margin-left: auto; }
.w157 { width: 157px; }
.w150 { width: 150px; }
.w137 { width: 137px; }
.w167 { width: 167px; }
.w96 { width: 96px; }
.combo.layer { border: 1px solid #8a8a8a; height: 22px; padding-left: 6px; margin-bottom: 1px; padding-bottom: 1px; }
.combo.layer i { width: 14px; height: 14px; background: #c83434; border: 1px solid #111; margin-right: 5px; }
.toggle { width: 30px; height: 30px; margin-left: 3px; background: #b3d7f3; border: 1px solid #1874c4; display: grid; place-items: center; }
.toggle svg, .pair { width: 24px; height: 24px; }
.pair { margin: 0 3px 0 5px; }

.work { height: 867px; flex: none; display: flex; border-top: 1px solid #9c9c9c; border-bottom: 1px solid #b8bdc4; }
.vbar { width: 35px; flex: none; display: flex; flex-direction: column; padding: 3px 0 0 1px; }
.vbar b { position: relative; width: 32px; height: 32px; display: grid; place-items: center; flex: none; }
.vbar b.on { margin: 1px; width: 30px; height: 30px; background: #b3d7f3; border: 1px solid #1874c4; }
.vbar hr { height: 8px; width: 26px; margin-left: 3px; background: linear-gradient(#8c8c8c, #8c8c8c) 0 3px / 100% 1px no-repeat; }
.vbar.right { width: 38px; border-right: 4px solid #e0e0e0; }
.vbar .more::after { content: ""; position: absolute; right: 1px; bottom: 1px; border-left: 7px solid transparent; border-bottom: 7px solid #000; }
.unit { font: 11.5px "DejaVu Sans", sans-serif; fill: #545454; stroke: #545454; stroke-width: .5; text-anchor: middle; }
.ir { font: 10px "DejaVu Sans", sans-serif; fill: #545454; }
.it { font-style: italic; font-size: 12px; }

.canvas { width: 1667px; height: 866px; }
.bg { fill: #000f20; }
.crisp, .mg, .rats { shape-rendering: crispEdges; }
.mg, .slk, .slk2, .fabl, .padl, .rats, .outline { fill: none; stroke-width: 1; }
.mg { stroke: #d935cf; }
.slk { stroke: #e3e6a4; }
.slk2 { stroke: #dfe0c6; stroke-width: 1.600; }
.outline { stroke: #e6e7b8; stroke-width: 1.300; }
.fabl { stroke: #98a2ab; }
.pad { fill: #e0b02e; }
.padl { stroke: #d3a92e; }
.hole { fill: #071c2c; stroke: #202f31; stroke-width: .6; }
.tiny { stroke: #f5e6b4; stroke-width: 1.600; stroke-dasharray: 1.500 1.200; opacity: .5; fill: none; }
.plus { stroke: #f2eda1; stroke-width: 1.600; }
.rats { stroke: #0d6370; }
.silk, .fab { font: 17.300px "DejaVu Sans Mono", monospace; }
.silk { fill: #f0edab; stroke: #f0edab; stroke-width: .35; }
.fab { fill: #a2a8ae; stroke: #a2a8ae; stroke-width: .4; }
.fab.s { font-size: 11px; }
.z { font-family: "DejaVu Sans", sans-serif; font-size: 16.800px; }
.pn { font: 14px "DejaVu Sans", sans-serif; fill: #f2ecd8; text-anchor: middle; opacity: .85; }
.pn.m { font-size: 11px; }
.pn.s { font-size: 8px; }

.panel { flex: 1; min-width: 0; }
h2 { margin: 0; height: 21px; background: #b9b9b9; font: inherit; line-height: 18px; padding-left: 3px; color: #1c1c1c; }
.sf { line-height: 19px; }
.tabs { height: 28px; padding: 5px 0 0 1px; display: flex; }
.tabs span { width: 50px; padding: 1px 0 0 5px; border: 1px solid #e2e2e2; border-width: 1px 1px 0 0; margin-top: 1px; }
.tabs .cur { padding: 1px 0 0 7px; margin-top: 0; background: #fafafa; }
.tabs span:last-child { width: 46px; padding-left: 7px; }
.book { height: 593px; margin-left: 1px; width: 177px; border-right: 1px solid #dcdcdc; border-bottom: 1px solid #dcdcdc; background: #f9f9f9; padding: 0 0 0 3px; }
ul { margin: 0; padding: 0; list-style: none; height: 567px; width: 172px; background: #f1f1f1; }
li { height: 18px; display: flex; align-items: center; padding-left: 17px; }
.sel { background: #e1e1e1; position: relative; }
.sel::before { content: ""; position: absolute; left: 6px; top: 4px; border: 5px solid transparent; border-left-color: #3c40e0; border-right: 0; }
li i { width: 14px; height: 11px; margin-right: 6px; }
li svg { width: 16px; height: 16px; margin-right: 4px; }
.c-fcu { background: #c83434; }
.c-bcu { background: #4d7fc4; }
.c-fadh { background: #840084; }
.c-badh { background: #000084; }
.c-fpaste { background: #a1928b; }
.c-bpaste { background: #00b0aa; }
.c-fsilk { background: #f2eda1; }
.c-bsilk { background: #e8b2a7; }
.c-fmask { background: repeating-conic-gradient(#6a3277 0 25%, #4b2a63 0 50%) 0 0 / 7px 7px; }
.c-bmask { background: repeating-conic-gradient(#0d7d70 0 25%, #05605a 0 50%) 0 0 / 7px 7px; }
.c-grey { background: #c2c2c2; }
.c-blue { background: #5994dc; }
.c-mint { background: #b4dbd2; }
.c-gold { background: #d8c852; }
.c-edge { background: #d0d2cd; }
.c-pink { background: #ff26e2; }
.c-cyan { background: #26e9ff; }
.c-ffab { background: #afafaf; }
.c-bfab { background: #585d84; }
.ldo { width: 163px; height: 19px; margin: 3px 0 0 4px; background: #fff; display: flex; align-items: center; padding: 0 0 1px 6px; }
.ldo i { border: 4px solid transparent; border-left: 4px solid #000; border-right: 0; margin-right: 2px; }
.presets { height: 104px; padding: 11px 7px 0; border-bottom: 3px solid #e6e6e6; }
.presets label { display: block; height: 17px; }
.presets .combo { width: 166px; margin-bottom: 3px; padding-left: 4px; }
.filter { display: grid; grid-template-columns: 92px 1fr; grid-auto-rows: 15px; padding: 5px 0 0 5px; }
.filter span { display: flex; align-items: center; }
.filter svg, .filter i { width: 13px; height: 13px; margin-right: 3px; flex: none; }
.filter i { border: 1px solid #777; border-radius: 3px; background: #f8f8f8; }

.msg { height: 31px; flex: none; display: flex; padding: 1px 0 0 11px; border-bottom: 1px solid #d2d2d2; }
.msg div:nth-child(1) { width: 54px; }
.msg div:nth-child(2) { width: 50px; }
.msg div:nth-child(3) { width: 112px; }
.msg div:nth-child(4) { width: 53px; }
.status { height: 24px; flex: none; display: grid; grid-template-columns: 850px 78px 160px 251px 184px 65px 174px 157px; padding-top: 1px; border-bottom: 1px solid #adb3bd; }
.status span { border-right: 1px solid #d9d9d9; padding: 4px 0 0 4px; }

.taskbar { height: 47px; flex: none; background: #d7dde8; display: flex; align-items: center; color: #222; padding-bottom: 1px; }
.weather { width: 518px; display: flex; align-items: center; padding-left: 17px; line-height: 16px; }
.weather > svg { width: 30px; height: 30px; margin-right: 3px; }
.weather span { color: #555; }
.badge { font: 10px "Open Sans", sans-serif; fill: #fff; text-anchor: middle; }
.apps { display: flex; align-items: center; }
.apps > div { position: relative; width: 44px; height: 44px; display: grid; place-items: center; }
.apps > div > svg { width: 24px; height: 24px; }
.apps .search { width: 218px; height: 31px; margin: 0 4px 0 3px; border-radius: 16px; background: #f2f5fa; border: 1px solid #c9ced8; display: flex; align-items: center; padding-left: 10px; font-size: 12.500px; color: #555; }
.apps .search .sm { width: 16px; height: 16px; margin-right: 9px; }
.apps .search .lemon { width: 34px; height: 24px; margin-left: auto; margin-right: 9px; }
.run::after, .act::after { content: ""; position: absolute; bottom: 1px; left: 19px; width: 6px; height: 3px; border-radius: 2px; background: #7d838b; }
.apps .act { width: 38px; margin-left: 3px; background: #eef2f8; border-radius: 4px; height: 40px; }
.act::after { left: 11px; bottom: 0; width: 16px; background: #0f6cbd; }
.li { font: bold 17px "Open Sans", sans-serif; fill: #fff; text-anchor: middle; }
.ki { font: bold 17px "Open Sans", sans-serif; fill: #fff; text-anchor: middle; }
.tray { margin-left: auto; display: flex; align-items: center; padding-right: 20px; line-height: 16px; }
.tray svg { width: 16px; height: 16px; }
.tray .cl { margin-left: 15px; width: 18px; height: 18px; }
.lang { width: 58px; text-align: center; }
.tray .vol { margin-left: 7px; }
.clock { width: 80px; text-align: right; }
.tray .bell { margin-left: 8px; }
```
